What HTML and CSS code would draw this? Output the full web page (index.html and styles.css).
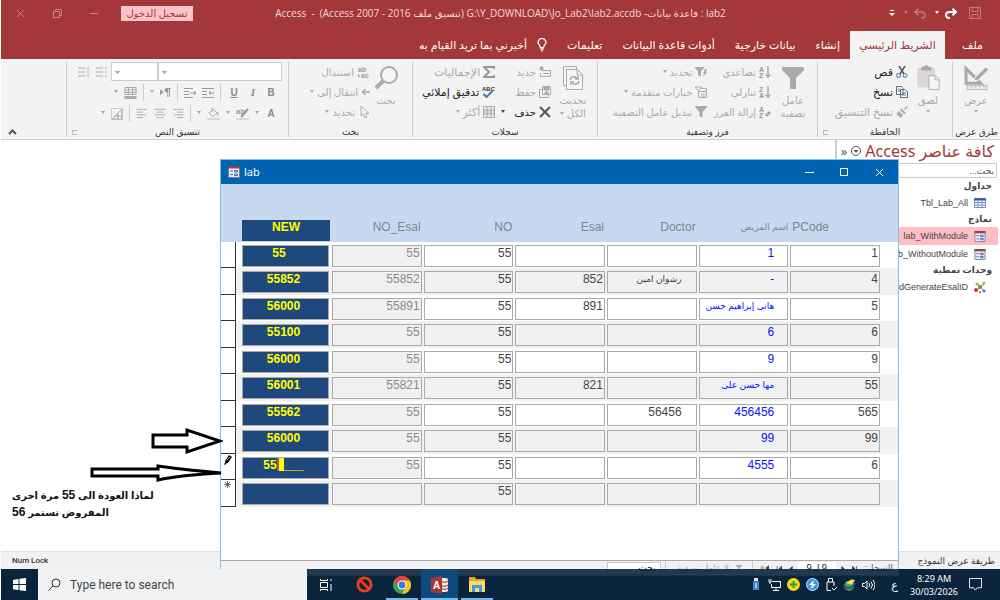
FILE: index.html
```html
<!DOCTYPE html>
<html lang="ar" dir="rtl">
<head>
<meta charset="utf-8">
<title>lab2 - Access</title>
<link rel="stylesheet" href="styles.css">
</head>
<body>
<svg class="defs" aria-hidden="true">
  <symbol id="form" viewBox="0 0 12 12"><path d="M.5.5h11v11H.5z" fill="#eef1f8" stroke="#6f7da6"/><path d="M0 0h12v2.500H0z" fill="#9b3c55"/><path d="M2 5h3M2 8.500h3" stroke="#3f66b0"/><path d="M6.500 4.500h3v1.500h-3zM6.500 8h3v1.500h-3z" fill="#fff" stroke="#3f66b0"/></symbol>
  <symbol id="funnel" viewBox="0 0 12 12"><path d="M0 0h12v1L7.500 6v6l-3-2V6L0 1z" fill="currentColor"/></symbol>
</svg>
<div class="app">
  <header class="titlebar">
    <div class="qat">
      <button aria-label="حفظ" class="dim"><svg viewBox="0 0 12 12" width="12" height="12" fill="none" stroke="currentColor"><path d="M.5.5h11v11H.5zM3 .5v4h6v-4M3 11.500V7.500h6v4"/></svg></button>
      <button aria-label="إعادة"><svg viewBox="0 0 12 11" width="12" height="11" fill="none" stroke="currentColor" stroke-width="2"><path d="M11 4H5Q1 4 1 7t4 3M7.500.7 11 4 7.500 7.300"/></svg></button>
      <span class="caret"></span>
      <button aria-label="تراجع" class="dim"><svg viewBox="0 0 12 11" width="12" height="11" fill="none" stroke="currentColor" stroke-width="1.500"><path d="M1 4h6q4 0 4 3t-4 3M4.500.7 1 4l3.500 3.300"/></svg></button>
      <span class="caret dim"></span>
      <button aria-label="تخصيص" class="custom"><svg viewBox="0 0 6 6" width="6" height="6" fill="currentColor"><path d="M1 0h4v1H1zM0 3h6L3 6z"/></svg></button>
    </div>
    <h1>lab2 : قاعدة بيانات- <bdi>G:\Y_DOWNLOAD\Jo_Lab2\lab2.accdb</bdi> (تنسيق ملف Access 2007 - 2016)&nbsp; - &nbsp;Access</h1>
    <div class="winctl">
      <button class="signin">تسجيل الدخول</button>
      <button aria-label="تصغير"><svg viewBox="0 0 9 9" width="9" height="9" fill="none" stroke="currentColor"><path d="M0 4.500h8"/></svg></button>
      <button aria-label="استعادة"><svg viewBox="0 0 9 9" width="9" height="9" fill="none" stroke="currentColor"><path d="M.5 2.500h6v6h-6zM2.500 2V.5h6v6H7"/></svg></button>
      <button aria-label="إغلاق"><svg viewBox="0 0 9 9" width="9" height="9" fill="none" stroke="currentColor"><path d="m1 1 7 7M8 1 1 8"/></svg></button>
    </div>
  </header>
  <nav class="tabs">
    <button class="file">ملف</button>
    <button class="active">الشريط الرئيسي</button>
    <button>إنشاء</button>
    <button>بيانات خارجية</button>
    <button>أدوات قاعدة البيانات</button>
    <button>تعليمات</button>
    <button class="tell"><svg viewBox="0 0 12 16" width="10" height="14" fill="none" stroke="currentColor" stroke-width="1.500"><path d="M4 11Q4 9 2.500 7.500a4.500 4.500 0 1 1 7 0Q8 9 8 11zM4 13h4M5 15h2"/></svg>أخبرني بما تريد القيام به</button>
  </nav>
  <section class="ribbon">
    <div class="group g-views">
      <div class="body">
        <button class="big"><svg viewBox="0 0 24 24" width="25" height="25"><path d="M2 3v14h14z" fill="none" stroke="#aaa" stroke-width="3"/><path d="m9 15 2-4L21 1l3 3-10 10z" fill="#aaa" stroke="#f3f3f3"/><path d="M3 19h19v4H3z" fill="#eee5ee" stroke="#bbb"/><path d="M7 19v2m4-2v2m4-2v2m4-2v2" stroke="#bbb"/></svg><span>عرض</span><i class="dd"></i></button>
      </div>
      <h2>طرق عرض</h2>
    </div>
    <div class="group g-clip">
      <div class="body">
        <button class="big"><svg viewBox="0 0 26 28" width="25" height="27"><path d="M1 3h19v21H1z" fill="#ddd5dd"/><path d="M5 2h3q3-4 5 0h3v4H5z" fill="#aaa"/><path d="M13.500 11.500h7l4 4v11h-11z" fill="#f8f4f8" stroke="#aaa"/><path d="M20 12v4h4" fill="none" stroke="#aaa"/></svg><span>لصق</span><i class="dd"></i></button>
        <div class="stack wide">
          <button class="on"><svg viewBox="0 0 12 12" width="12" height="12" fill="none"><path d="m3 0 5 8M9 0 4 8" stroke="#555" stroke-width="1.500"/><circle cx="2.500" cy="9.500" r="2" stroke="#4379b5"/><circle cx="9" cy="9.500" r="2" stroke="#4379b5"/></svg>قص</button>
          <button class="on"><svg viewBox="0 0 12 12" width="12" height="12" fill="#fff" stroke="#666"><path d="M.5.5h5l1.500 2v6H.5zM4.500 3.500H9L11.500 6v5.500h-7z"/><path d="M2 3h2M2 5h2M6 7h4M6 9h4" stroke="#4379b5"/></svg>نسخ</button>
          <button><svg viewBox="0 0 12 12" width="12" height="12" fill="#aaa"><path d="m8 3 3-3 1 1-3 3zM5 2l5 5-2 1-4-4zM3 5l4 4-2 3-5-4z"/></svg>نسخ التنسيق</button>
        </div>
      </div>
      <h2>الحافظة</h2><span class="launch"></span>
    </div>
    <div class="group g-sort">
      <div class="body">
        <button class="big"><svg width="22" height="24" viewBox="0 0 22 24"><path d="M0 1h22v3l-8 8v11H8V12L0 4z" fill="#aaa"/></svg><span>عامل<br>تصفية</span></button>
        <div class="stack">
          <button><svg viewBox="0 0 12 12" width="12" height="12"><text x="0" y="6">A</text><text x="0" y="12">Z</text><path d="M9 0v11M6.500 8.500 9 11l2.500-2.500" fill="none" stroke="#aaa" stroke-width="1.500"/></svg>تصاعدي</button>
          <button><svg viewBox="0 0 12 12" width="12" height="12"><text x="0" y="6">Z</text><text x="0" y="12">A</text><path d="M9 0v11M6.500 8.500 9 11l2.500-2.500" fill="none" stroke="#aaa" stroke-width="1.500"/></svg>تنازلي</button>
          <button><svg viewBox="0 0 12 12" width="12" height="12"><text x="0" y="6">A</text><text x="0" y="12">Z</text><path d="m6 9 4-4 2 2-4 4z" fill="#aaa"/></svg>إزالة الفرز</button>
        </div>
        <div class="stack">
          <button><svg width="12" height="12" viewBox="0 0 12 12"><path d="M0 1h9v1L6 5v6L3 9V5L0 2zM10 3h2l-1 3h1l-4 5 1-4H8z" fill="#aaa"/></svg>تحديد<i class="dd"></i></button>
          <button><svg width="12" height="12" viewBox="0 0 12 12" fill="none" stroke="#aaa"><path d="M0 1h7L3.500 5zM3.500 4v7.500h8v-9H6M4 5.500h7M6 8h4M6 10h4"/></svg>خيارات متقدمة<i class="dd"></i></button>
          <button><svg width="12" height="12"><use href="#funnel"/></svg>تبديل عامل التصفية</button>
        </div>
      </div>
      <h2>فرز وتصفية</h2>
    </div>
    <div class="group g-rec">
      <div class="body">
        <button class="big"><svg viewBox="0 0 20 24" width="20" height="24" fill="#f8f4f8" stroke="#aaa"><path d="M.5.500h13V3M.5.500v19H3M3.500 3.500h11l5 5v15h-16z"/><path d="M14 4v5h5" fill="none"/><path d="M7 14q1-4 5-3l3 2m0-3v3h-3m4 2q-1 4-5 3l-3-2m0 3v-3h3" fill="none" stroke-width="1.500"/></svg><span>تحديث<br>الكل <i class="dd in"></i></span></button>
        <div class="stack">
          <button><svg viewBox="0 0 12 12" width="12" height="12" fill="none" stroke="#aaa"><path d="M2.500 4.500h9v6h-10V7M4 7.500h6" /><path d="M2.500 0v5M0 2.500h5M.7.7l3.600 3.600M4.300.7.7 4.300"/></svg>جديد</button>
          <button><svg viewBox="0 0 12 12" width="12" height="12" fill="none" stroke="#aaa"><path d="M3.500.500h8v8h-8zM3 3.500H.5v8H9V9"/><path d="M5 1h5v3H5zM6 6h3v2H6z" fill="#aaa"/></svg>حفظ</button>
          <button class="on"><svg viewBox="0 0 12 12" width="12" height="12" stroke="#555" stroke-width="2"><path d="m1 1 10 10M11 1 1 11"/></svg>حذف<i class="dd gap"></i></button>
        </div>
        <div class="stack wide">
          <button><svg viewBox="0 0 12 12" width="12" height="12" fill="none" stroke="#999" stroke-width="2"><path d="M11 3V1H1l5 5-5 5h10V9"/></svg>الإجماليات</button>
          <button class="on"><svg viewBox="0 0 13 12" width="13" height="12"><text x="0" y="5" class="dark">ABC</text><path d="m1.500 8 3 3 6-6" fill="none" stroke="#4379b5" stroke-width="2"/></svg>تدقيق إملائي</button>
          <button><svg viewBox="0 0 12 12" width="12" height="12" fill="none" stroke="#aaa"><path d="M0 4h12v4H0z" fill="#ddd5dd"/><path d="M.5.500h11v11H.5zM4 0v12M8 0v12"/></svg>أكثر<i class="dd"></i></button>
        </div>
      </div>
      <h2>سجلات</h2>
    </div>
    <div class="group g-find">
      <div class="body">
        <button class="big"><svg viewBox="0 0 24 24" width="24" height="24" fill="#f8f4f8" stroke="#aaa"><circle cx="15" cy="9" r="8" stroke-width="2"/><path d="m9 15-7 7" stroke-width="4"/></svg><span>بحث</span></button>
        <div class="stack">
          <button><svg viewBox="0 0 13 13" width="13" height="13"><text x="1" y="6">ab</text><text x="4" y="12">ac</text><path d="M1.500 8v2.500H3" fill="none" stroke="#999"/></svg>استبدال</button>
          <button><svg viewBox="0 0 12 12" width="9" height="12" fill="none" stroke="#aaa" stroke-width="2"><path d="M12 6H2M6 2 2 6l4 4"/></svg>انتقال إلى<i class="dd"></i></button>
          <button><svg viewBox="0 0 12 12" width="12" height="12" fill="none" stroke="#aaa"><path d="M3 0v10l2.500-2L7 12l2-1-1.500-3.500H11z"/></svg>تحديد<i class="dd"></i></button>
        </div>
      </div>
      <h2>بحث</h2>
    </div>
    <div class="group g-text">
      <div class="body format">
        <div class="frow"><select class="fontname" aria-label="الخط"><option></option></select><select class="fontsize" aria-label="حجم الخط"><option></option></select>
          <svg viewBox="0 0 12 12" width="12" height="12" stroke="#aaa"><path d="M0 2h7M0 6h7M0 10h7M9 2h2M9 6h2M9 10h2"/></svg>
          <svg viewBox="0 0 12 12" width="12" height="12" stroke="#aaa"><path d="M0 2h7M0 6h7M0 10h7M10 1v3M9 6h2M10 8v3"/></svg></div>
        <div class="frow letters"><b>B</b><em>I</em><u>U</u><i class="sep"></i>
          <svg viewBox="0 0 12 10" width="12" height="10" fill="none" stroke="#999"><path d="M0 .5h12M0 9.500h12M0 3.500h5M0 6.500h5M12 5H7m2-2L7 5l2 2"/></svg>
          <svg viewBox="0 0 12 10" width="12" height="10" fill="none" stroke="#999"><path d="M0 .5h9M0 9.500h9M0 3.500h5M0 6.500h5M6 5h6m-2-2 2 2-2 2"/></svg><i class="sep"></i>
          <svg viewBox="0 0 12 10" width="11" height="9" fill="#999"><path d="M0 1v7l4-3.500zM7 0h5v1h-1v9h-1V1H9v9H8V5Q5 5 5 2.500T7 0z"/></svg><i class="dd"></i><i class="sep"></i>
          <svg viewBox="0 0 12 12" width="13" height="12" fill="none" stroke="#aaa"><path d="M.5.500h11v7H.5zM0 3h12M0 5.500h12M4 0v8M8 0v8"/><path d="M0 10.500h12" stroke-width="3"/></svg><i class="dd"></i></div>
        <div class="frow letters"><b>A</b><i class="dd"></i>
          <svg viewBox="0 0 13 12" width="13" height="12"><text x="0" y="6" class="ab">ab</text><path d="m5 9 7-8" stroke="#999" stroke-width="2"/><path d="M0 11h13" stroke="#ddd5dd" stroke-width="2"/></svg><i class="dd"></i>
          <svg viewBox="0 0 13 12" width="13" height="12" fill="none" stroke="#aaa"><path d="m2 5 4-4 4 4-4 4zM5 0v4M11 4v4"/><path d="M0 11h13" stroke="#ddd5dd" stroke-width="2"/></svg><i class="dd"></i><i class="sep"></i>
          <svg viewBox="0 0 12 12" width="12" height="11" stroke="#aaa"><path d="M1 1.500h11M5 4.500h7M1 7.500h11M5 10.500h7"/></svg>
          <svg viewBox="0 0 12 12" width="12" height="11" stroke="#aaa"><path d="M0 1.500h12M2 4.500h8M0 7.500h12M2 10.500h8"/></svg>
          <svg viewBox="0 0 12 12" width="12" height="11" stroke="#aaa"><path d="M0 1.500h11M0 4.500h7M0 7.500h11M0 10.500h7"/></svg><i class="sep"></i>
          <svg viewBox="0 0 12 12" width="12" height="12" fill="none" stroke="#aaa"><path d="M.5.500h11v11H.5z" stroke-dasharray="1 1"/><path d="M1 11 11 1v10zM7 5v6M4 8h7"/></svg><i class="dd"></i></div>
      </div>
      <h2>تنسيق النص</h2><span class="launch"></span>
    </div>
    <button class="collapse" aria-label="طي الشريط"><svg viewBox="0 0 9 6" width="9" height="6" fill="none" stroke="#555" stroke-width="2"><path d="m1 5 3.500-3.500L8 5"/></svg></button>
  </section>

  <main class="work">
    <aside class="navpane">
      <div class="navhead"><h2>كافة عناصر Access</h2><svg viewBox="0 0 10 10" width="10" height="10" fill="none" stroke="#555"><circle cx="5" cy="5" r="4.500"/><path d="M2.500 4h5L5 7z" fill="#555" stroke="none"/></svg><button aria-label="طي" dir="ltr">»</button></div>
      <input class="navsearch" aria-label="بحث" placeholder="بحث...">
      <h3>جداول</h3>
      <a href="#"><svg viewBox="0 0 12 10" width="12" height="10" fill="#fff" stroke="#6d8fc5"><path d="M.5.500h11v9H.5z"/><path d="M0 1.500h12" stroke="#35589b" stroke-width="2"/><path d="M0 4.500h12M0 7h12M4 2v8M8 2v8"/></svg><bdi>Tbl_Lab_All</bdi></a>
      <h3>نماذج</h3>
      <a href="#" class="sel"><svg width="12" height="11"><use href="#form"/></svg><bdi>lab_WithModule</bdi></a>
      <a href="#"><svg width="12" height="11"><use href="#form"/></svg><bdi>lab_WithoutModule</bdi></a>
      <h3>وحدات نمطية</h3>
      <a href="#"><svg viewBox="0 0 12 12" width="12" height="12"><path d="m3 2 7 8M10 3 3 9" stroke="#666"/><circle cx="3" cy="3" r="1.500" fill="#e0a020"/><circle cx="10" cy="2" r="1.500" fill="#e0a020"/><circle cx="6" cy="6" r="2" fill="#5a9e4a"/><circle cx="2" cy="9" r="2" fill="#cc3d2e"/><circle cx="10" cy="10" r="1.500" fill="#4379b5"/><circle cx="6" cy="11" r="1" fill="#cc3d2e"/></svg><bdi>ModGenerateEsalID</bdi></a>
    </aside>
  </main>

  <section class="labwin" dir="ltr">
    <div class="labtitle"><svg width="12" height="12"><use href="#form"/></svg><span>lab</span>
      <div class="labctl">
        <button aria-label="تصغير"><svg viewBox="0 0 9 9" width="9" height="9" stroke="#fff"><path d="M0 4.500h9"/></svg></button>
        <button aria-label="تكبير"><svg viewBox="0 0 9 9" width="9" height="9" stroke="#fff" fill="none"><path d="M.5.500h7v7h-7z"/></svg></button>
        <button aria-label="إغلاق"><svg viewBox="0 0 9 9" width="9" height="9" stroke="#fff"><path d="m1 1 7 7M8 1 1 8"/></svg></button>
      </div>
    </div>
    <table>
      <colgroup><col class="c-sel"><col class="c-new"><col><col><col><col><col><col><col class="c-end"></colgroup>
      <thead><tr><th></th><th><span class="newhead">NEW</span></th><th>NO_Esal</th><th>NO</th><th>Esal</th><th>Doctor</th><th class="arh" dir="rtl">اسم المريض</th><th class="pc">PCode</th><th></th></tr></thead>
      <tbody>
        <tr><td class="rs"></td><td><input class="new short" aria-label="NEW" value="55"></td><td><input class="off" aria-label="NO_Esal" value="55"></td><td><input aria-label="NO" value="55"></td><td><input aria-label="Esal"></td><td><input class="mid" aria-label="Doctor"></td><td><input class="blue" aria-label="اسم المريض" value="1"></td><td><input aria-label="PCode" value="1"></td><td></td></tr>
        <tr><td class="rs"></td><td><input class="new" aria-label="NEW" value="55852"></td><td><input class="off" aria-label="NO_Esal" value="55852"></td><td><input aria-label="NO" value="55"></td><td><input aria-label="Esal" value="852"></td><td><input class="mid ar" aria-label="Doctor" value="رشوان امين"></td><td><input class="blue" aria-label="اسم المريض" value="-"></td><td><input aria-label="PCode" value="4"></td><td></td></tr>
        <tr><td class="rs"></td><td><input class="new" aria-label="NEW" value="56000"></td><td><input class="off" aria-label="NO_Esal" value="55891"></td><td><input aria-label="NO" value="55"></td><td><input aria-label="Esal" value="891"></td><td><input class="mid" aria-label="Doctor"></td><td><input class="blue ar" aria-label="اسم المريض" value="هانى إبراهيم حسن"></td><td><input aria-label="PCode" value="5"></td><td></td></tr>
        <tr><td class="rs"></td><td><input class="new" aria-label="NEW" value="55100"></td><td><input class="off" aria-label="NO_Esal" value="55"></td><td><input aria-label="NO" value="55"></td><td><input aria-label="Esal"></td><td><input class="mid" aria-label="Doctor"></td><td><input class="blue" aria-label="اسم المريض" value="6"></td><td><input aria-label="PCode" value="6"></td><td></td></tr>
        <tr><td class="rs"></td><td><input class="new" aria-label="NEW" value="56000"></td><td><input class="off" aria-label="NO_Esal" value="55"></td><td><input aria-label="NO" value="55"></td><td><input aria-label="Esal"></td><td><input class="mid" aria-label="Doctor"></td><td><input class="blue" aria-label="اسم المريض" value="9"></td><td><input aria-label="PCode" value="9"></td><td></td></tr>
        <tr><td class="rs"></td><td><input class="new" aria-label="NEW" value="56001"></td><td><input class="off" aria-label="NO_Esal" value="55821"></td><td><input aria-label="NO" value="55"></td><td><input aria-label="Esal" value="821"></td><td><input class="mid" aria-label="Doctor"></td><td><input class="blue ar" aria-label="اسم المريض" value="مها حسن على"></td><td><input aria-label="PCode" value="55"></td><td></td></tr>
        <tr><td class="rs"></td><td><input class="new" aria-label="NEW" value="55562"></td><td><input class="off" aria-label="NO_Esal" value="55"></td><td><input aria-label="NO" value="55"></td><td><input aria-label="Esal"></td><td><input class="mid" aria-label="Doctor" value="56456"></td><td><input class="blue" aria-label="اسم المريض" value="456456"></td><td><input aria-label="PCode" value="565"></td><td></td></tr>
        <tr><td class="rs"></td><td><input class="new" aria-label="NEW" value="56000"></td><td><input class="off" aria-label="NO_Esal" value="55"></td><td><input aria-label="NO" value="55"></td><td><input aria-label="Esal"></td><td><input class="mid" aria-label="Doctor"></td><td><input class="blue" aria-label="اسم المريض" value="99"></td><td><input aria-label="PCode" value="99"></td><td></td></tr>
        <tr><td class="rs"><svg viewBox="0 0 8 10" width="8" height="10"><path d="m1 6 4-6 3 2-4 6-3 1z" fill="#111"/><path d="m3 5 3-3" stroke="#e0b030"/><path d="M0 9h2" stroke="#111"/></svg></td><td><div class="new edit" role="textbox" tabindex="0" aria-label="NEW">55<i></i><span>___</span></div></td><td><input class="off" aria-label="NO_Esal" value="55"></td><td><input aria-label="NO" value="55"></td><td><input aria-label="Esal"></td><td><input class="mid" aria-label="Doctor"></td><td><input class="blue" aria-label="اسم المريض" value="4555"></td><td><input aria-label="PCode" value="6"></td><td></td></tr>
        <tr><td class="rs"><svg viewBox="0 0 8 8" width="7" height="7" stroke="#555"><path d="M4 0v8M0 4h8M1 1l6 6M7 1 1 7"/></svg></td><td><input class="new" aria-label="NEW"></td><td><input class="off" aria-label="NO_Esal"></td><td><input aria-label="NO" value="55"></td><td><input aria-label="Esal"></td><td><input class="mid" aria-label="Doctor"></td><td><input class="blue" aria-label="اسم المريض"></td><td><input aria-label="PCode"></td><td></td></tr>
      </tbody>
    </table>
    <div class="recnav" dir="rtl">
      <span class="reclabel">السجل:</span>
      <svg viewBox="0 0 8 6" width="6" height="5"><path d="M0 0v6l4-3zM6 0v6" fill="#444" stroke="#444"/></svg>
      <svg viewBox="0 0 4 6" width="4" height="5"><path d="M0 0v6l4-3z" fill="#444"/></svg>
      <input class="recno" aria-label="رقم السجل" value="9 لـ 9">
      <svg viewBox="0 0 4 6" width="4" height="5"><path d="M4 0v6L0 3z" fill="#444"/></svg>
      <svg viewBox="0 0 8 6" width="6" height="5"><path d="M8 0v6L4 3zM1.500 0v6" fill="#444" stroke="#444"/></svg>
      <svg viewBox="0 0 10 6" width="9" height="6"><path d="M10 0v6L6 3z" fill="#444"/><path d="M2.500 0v6M0 3h5M1 1l3 4M4 1 1 5" stroke="#e0a050"/></svg>
      <button class="nofilter"><svg width="6" height="6"><use href="#funnel"/></svg> بلا عامل تصفية</button>
      <input class="recfind" aria-label="بحث في السجلات" value="بحث">
    </div>
  </section>

  <div class="note" dir="rtl">لماذا العودة الى <b>55</b> مرة اخرى<br>المفروض تستمر <b>56</b></div>
  <svg class="arrow a1" viewBox="0 0 72 28" width="72" height="28"><path d="M2 8h34V3l33 11-33 11v-5H2z"/></svg>
  <svg class="arrow a2" viewBox="0 0 136 20" width="136" height="20"><path d="M2 6h66V3q20 3 63 7Q90 12 68 17v-4H2z"/></svg>

  <div class="status"><span>طريقة عرض النموذج</span><span class="num">Num Lock</span></div>

  <footer class="taskbar" dir="ltr">
    <button class="start" aria-label="Start"><svg viewBox="0 0 13 13" width="13" height="13" fill="#fff"><path d="m0 2 5.500-1v5H0zM6.500.800 13 0v6H6.500zM0 7h5.500v5L0 11.200zM6.500 7H13v6l-6.500-.800z"/></svg></button>
    <label class="search"><svg viewBox="0 0 13 13" width="13" height="13" fill="none" stroke="#333"><circle cx="8" cy="5" r="4"/><path d="m5 8-4.500 4.500"/></svg><input placeholder="Type here to search" aria-label="Type here to search"></label>
    <button class="task" aria-label="Task View"><svg viewBox="0 0 14 12" width="14" height="12" fill="none" stroke="#fff"><path d="M1.500 3.500h7v5h-7zM1.500 0v1.500h7V0M1.500 12v-1.500h7V12M12 0v2M12 5v7"/></svg></button>
    <button class="task" aria-label="Blocked"><svg viewBox="0 0 18 18" width="17" height="17" fill="none" stroke="#f23a1d" stroke-width="3"><circle cx="9" cy="9" r="7"/><path d="m4 4 10 10"/></svg></button>
    <button class="task open" aria-label="Chrome"><svg viewBox="0 0 18 18" width="18" height="18"><circle cx="9" cy="9" r="9" fill="#34a853"/><path d="M1.200 4.500A9 9 0 0 1 16.800 4.500H9L5 11z" fill="#ea4335"/><path d="M9 4.500h7.800A9 9 0 0 1 9 18l4-7z" fill="#fbc116"/><circle cx="9" cy="9" r="4.500" fill="#fff"/><circle cx="9" cy="9" r="3.400" fill="#3578e5"/></svg></button>
    <button class="task open current" aria-label="Access"><svg viewBox="0 0 18 18" width="18" height="18"><path d="M0 2 11 0v18L0 16z" fill="#a4373a"/><text x="2" y="13">A</text><path d="M11 2h3q3 0 3 1.500V14q0 2-3 2h-3z" fill="#f3e4e4"/><path d="M11 6q5 1 6-1M11 10q5 1 6-1M11 13q5 1 6-1" fill="none" stroke="#a4373a"/></svg></button>
    <button class="task open" aria-label="Explorer"><svg viewBox="0 0 18 16" width="18" height="16"><path d="M1 0h6l1 2h9v13H1z" fill="#e5a823"/><path d="M1 4h16v11H1z" fill="#ffd866"/><path d="M4 15V8h10v7h-3v-4H7v4z" fill="#3d9be0"/></svg></button>
    <div class="tray">
      <svg viewBox="0 0 12 13" width="12" height="13"><path d="M4 0h4v3H4z" fill="#ddd"/><path d="M3 3h6v9H3z" fill="#3f83d8"/><path d="M6 5v5" stroke="#fff"/></svg>
      <svg viewBox="0 0 13 12" width="13" height="12" fill="none" stroke="#fff"><path d="M4 2.500h8.500v6H3.500V5M8 9v2.500M5 11.500h6M1 0v3h2V0M2 3v2"/></svg>
      <svg viewBox="0 0 13 13" width="13" height="13"><circle cx="6.500" cy="6.500" r="6.500" fill="#f5d619"/><path d="M6.500 3v7M3 6.500h7" stroke="#2b9a3a" stroke-width="2"/></svg>
      <svg viewBox="0 0 13 13" width="13" height="13"><circle cx="6.500" cy="6.500" r="6" fill="#3c98e6" stroke="#bfe1ff"/><path d="M8 2 3 7h3l-1 4 5-5H7z" fill="#fff"/></svg>
      <svg viewBox="0 0 12 13" width="12" height="13" fill="none" stroke="#fff"><path d="M3.500 4V.5h4V4M2 12.500V4h7v4M2 12.500h4M7 10l2 2 3-3"/></svg>
      <svg viewBox="0 0 13 12" width="13" height="12"><circle cx="6" cy="7" r="5" fill="#3aa545"/><path d="M3 4q5-5 9-3L9 6z" fill="#f0e040"/><path d="M1 6q2 5 8 2l3-4" fill="none" stroke="#2454a0" stroke-width="2"/><path d="m2 9 3 2" stroke="#e33"/></svg>
      <svg viewBox="0 0 13 12" width="13" height="12" fill="none" stroke="#fff"><path d="M.5 4.500h2L5 2v8L2.500 7.500h-2zM7 4q1.500 2 0 4M9 2.500q3 3.500 0 7M11 1q4 5 0 10"/></svg>
      <span class="lang">ع</span>
      <div class="clock"><span>8:29 AM</span><span>30/03/2026</span></div>
      <svg class="bell" viewBox="0 0 14 14" width="13" height="13" fill="none" stroke="#fff"><path d="M.5.500h13v10H9l-2 2.500-2-2.500H.5z"/></svg>
    </div>
  </footer>
</div>
</body>
</html>
```
FILE: styles.css
```css
* { box-sizing: border-box; }
body { margin: 0; font: 10px/14px "Noto Sans", "DejaVu Sans", sans-serif; color: #333; background: #fff; }
button, input, select { font: inherit; color: inherit; border: 0; margin: 0; padding: 0; background: none; }
button { white-space: nowrap; }
h1, h2, h3 { margin: 0; font: inherit; }
svg { flex: none; display: block; }
svg text { font: bold 7px "Liberation Sans", sans-serif; fill: #999; direction: ltr; }
svg text.dark { font-size: 6px; fill: #333; }
svg text.ab { font-size: 8px; }
a { color: inherit; text-decoration: none; }
.defs { position: absolute; width: 0; height: 0; }
.app { position: relative; display: flex; flex-direction: column; min-height: 100vh; border-left: 1px solid #fff; overflow: hidden; background: #0a2236; }

.titlebar { display: grid; grid-template-columns: 270px 1fr 270px; align-items: center; height: 31px; padding-bottom: 5px; background: #a4373a; color: #fff; }
.titlebar h1 { color: #f5d9da; text-align: center; white-space: nowrap; font: 10px/14px "Open Sans", "DejaVu Sans", sans-serif; }
.qat { display: flex; align-items: center; gap: 9px; padding-right: 19px; }
.qat button:nth-child(2) { margin-right: 3px; }
.caret { border: 2px solid transparent; border-top: 3px solid #fff; margin-right: -3px; height: 3px; }
.dim { opacity: .35; }
.winctl { display: flex; align-items: center; justify-content: flex-end; gap: 28px; padding-left: 15px; color: #cf8587; }
.signin { width: 72px; height: 15px; line-height: 14px; margin-left: -6px; background: #f9c4c7; color: #a4373a; }

.tabs { display: flex; height: 28px; background: #a4373a; color: #fff; }
.tabs button { padding: 0 10px; font-size: 11px; }
.tabs .file { width: 55px; }
.tabs .active { width: 95px; padding: 0; background: #f3f3f3; color: #a4373a; }
.tabs .tell { display: flex; align-items: center; gap: 10px; }

.ribbon { display: flex; height: 81px; padding-top: 2px; background: #f3f3f3; border-bottom: 1px solid #d0d0d0; color: #aaa; }
.group { position: relative; flex: none; display: flex; flex-direction: column; border-left: 1px solid #ccc; margin-bottom: 2px; }
.g-views { width: 48px; }
.g-clip { width: 135px; }
.g-sort { width: 220px; }
.g-rec { width: 185px; }
.g-find { width: 124px; }
.g-text { width: 222px; }
.body { display: flex; flex: 1; padding: 0 8px; gap: 6px; }
.group h2 { height: 12px; text-align: center; color: #333; font-size: 9px; white-space: nowrap; }
.big { display: flex; flex-direction: column; align-items: center; gap: 3px; min-width: 32px; padding-top: 4px; line-height: 13px; font-size: 10px; }
.big svg { height: 26px; }
.stack { display: flex; flex-direction: column; padding-top: 1px; }
.stack button { display: flex; align-items: center; gap: 3px; height: 20px; font-size: 10px; }
.stack.wide button { font-size: 11px; }
.stack .on { color: #222; }
.dd { flex: none; border: 2px solid transparent; border-top: 3px solid #aaa; height: 3px; }
.dd.in { display: inline-block; }
.dd.gap { margin-right: 6px; border-top-color: #444; }
.launch { position: absolute; left: 5px; bottom: 2px; width: 5px; height: 5px; border: 1px solid #bbb; border-right: 0; }
.g-clip .body { gap: 4px; }
.g-find .body { padding-right: 10px; gap: 0; }
.format { flex-direction: column; gap: 0; padding: 0 6px; }
.frow { display: flex; align-items: center; gap: 9px; height: 21px; }
.fontname, .fontsize { appearance: none; height: 19px; border: 1px solid #ccc; border-radius: 0; background: #fff; background-image: linear-gradient(#aaa, #aaa), linear-gradient(#aaa, #aaa), linear-gradient(#aaa, #aaa); background-repeat: no-repeat; background-position: 3px 8px, 4px 9px, 5px 10px; background-size: 5px 1px, 3px 1px, 1px 1px; }
.fontname { width: 124px; }
.fontsize { width: 47px; margin-right: -9px; }
.fontsize + svg { margin-right: -6px; }
.fontsize + svg + svg { margin-right: -3px; }
.letters { padding-right: 5px; gap: 6px; }
.letters b, .letters em, .letters u { width: 12px; text-align: center; color: #888; font: bold 10px "Liberation Sans", sans-serif; }
.letters em { font-style: italic; font-family: "Liberation Serif", serif; }
.letters em, .letters em + u { margin-left: 1px; }
.sep { width: 1px; height: 17px; background: #ccc; }
.collapse { margin: auto auto 4px 7px; }

.work { flex: 1; display: flex; background: #fff; }
.navpane { width: 165px; border-left: 2px solid #ccc; }
.navhead { display: flex; align-items: center; gap: 4px; height: 22px; padding-right: 6px; color: #555; }
.navhead h2 { color: #a4373a; font-size: 16px; white-space: nowrap; }
.navhead button { font-size: 13px; }
.navsearch { display: block; width: 160px; height: 15px; margin: 1px 3px 1px 0; padding: 0 2px; border: 1px solid #ccc; font-size: 9px; }
.navsearch::placeholder { color: #555; }
.navpane h3 { padding-right: 8px; font-size: 9px; font-weight: bold; height: 15px; color: #444; }
.navpane a { display: flex; align-items: center; gap: 6px; height: 18px; padding-right: 14px; font: 9px/14px "Liberation Sans", sans-serif; color: #444; white-space: nowrap; }
.navpane .sel { background: #ffbfc2; margin-right: 2px; padding-right: 12px; }

.labwin { position: absolute; top: 159px; left: 219px; right: 101px; background: #fff; border: 1px solid #8bbbe6; }
.labtitle { display: flex; align-items: center; gap: 4px; height: 24px; padding: 0 14px 0 7px; background: #0063b1; color: #fff; font-size: 11px; }
.labctl { display: flex; gap: 26px; margin-left: auto; }
table { width: 100%; table-layout: fixed; border-collapse: separate; border-spacing: 0; font: 12px/14px "Liberation Sans", "DejaVu Sans", sans-serif; }
.c-sel { width: 15px; }
.c-new { width: 96px; }
.c-end { width: 16px; }
th { height: 58px; padding: 0 3px 8px 0; vertical-align: bottom; text-align: right; font-weight: normal; color: #7f858c; background: #c7d9f1; }
th:nth-child(2) { padding: 0 2px 1px 6px; }
.newhead { display: block; height: 21px; background: #1f497d; color: #ff0; font-weight: bold; text-align: center; }
.arh { font-size: 9px; padding-right: 2px; text-align: right; }
.pc { text-align: left; padding-left: 2px; }
tr:nth-child(odd) td { height: 26px; }
tr:nth-child(even) td { height: 27px; background: #f1f1f1; }
td { padding: 3px 2px 0 0; vertical-align: top; }
td:nth-child(2) { padding-left: 6px; padding-right: 3px; }
tbody tr:nth-child(n) .rs { padding: 1px 3px; background: #fff; border-right: 1px solid #333; border-bottom: 1px solid #333; }
td input, .new { display: block; width: 100%; height: 22px; padding: 0 1px 6px; border: 1px solid #aaa; text-align: right; color: #444; background: transparent; }
td .off { background: #f0f0f0; color: #8a8a8a; }
td .mid { padding-right: 14px; }
td .blue { padding-right: 13px; color: #11f; }
td .ar { direction: rtl; font-size: 9px; text-align: right; }
td .new { background: #1f497d; color: #ff0; font-weight: bold; text-align: center; padding-right: 5px; }
td .short { padding-right: 14px; }
.edit { display: flex; justify-content: center; line-height: 14px; }
.edit i { width: 7px; height: 13px; background: #ff0; border-left: 2px solid #a56a20; }
.recnav { display: flex; align-items: center; gap: 7px; height: 15px; margin-top: 53px; padding: 0 5px; border-top: 1px solid #aaa; background: #f1f1f3; font-size: 9px; color: #666; }
.recno { width: 38px; height: 13px; background: #fff; color: #222; text-align: center; direction: rtl; margin: 0 -2px; }
.nofilter { display: flex; align-items: center; gap: 4px; width: 88px; padding-right: 10px; border: solid #ccc; border-width: 0 1px; color: #aaa; }
.recfind { width: 54px; height: 13px; padding: 0 4px; background: #fff; border: 1px solid #ccc; color: #222; margin-right: -3px; }

.note { position: absolute; left: 11px; top: 487px; font: bold 10px/17px "Liberation Sans", "DejaVu Sans", sans-serif; color: #111; text-align: left; white-space: nowrap; }
.note b { font-size: 12px; }
.arrow { position: absolute; fill: #fff; stroke: #000; stroke-width: 3; }
.a1 { left: 150px; top: 427px; }
.a2 { left: 89px; top: 463px; }

.status { display: flex; justify-content: space-between; align-items: center; height: 18px; padding: 0 5px 0 11px; background: #f1f1f1; border-top: 1px solid #ddd; font-size: 9px; }
.num { font-family: Roboto, sans-serif; font-size: 8px; font-weight: 500; }
.taskbar { position: relative; z-index: 2; display: flex; height: 31px; background: rgba(10, 38, 60, .9); color: #fff; }
.start { width: 37px; display: flex; align-items: center; justify-content: center; }
.search { width: 269px; display: flex; align-items: center; gap: 9px; padding-left: 10px; background: #f1f2f4; font: 12px/16px Roboto, sans-serif; }
.search input { flex: 1; min-width: 0; }
.search input::placeholder { color: #444; }
.task { display: flex; align-items: center; justify-content: center; width: 38px; padding: 0 3px; }
.task.open { box-shadow: inset 0 -2px #76b9ed; width: 32px; margin: 0 3px; }
.task.current { width: 37px; margin: 0; background: #0d4a7d; }
.task text { font-size: 10px; fill: #fff; }
.tray { display: flex; align-items: center; gap: 6px; margin-left: auto; padding-right: 18px; font-size: 9px; }
.lang { width: 9px; margin-left: 9px; text-align: center; font-size: 11px; }
.clock { display: flex; flex-direction: column; align-items: center; width: 58px; line-height: 13px; }
```
